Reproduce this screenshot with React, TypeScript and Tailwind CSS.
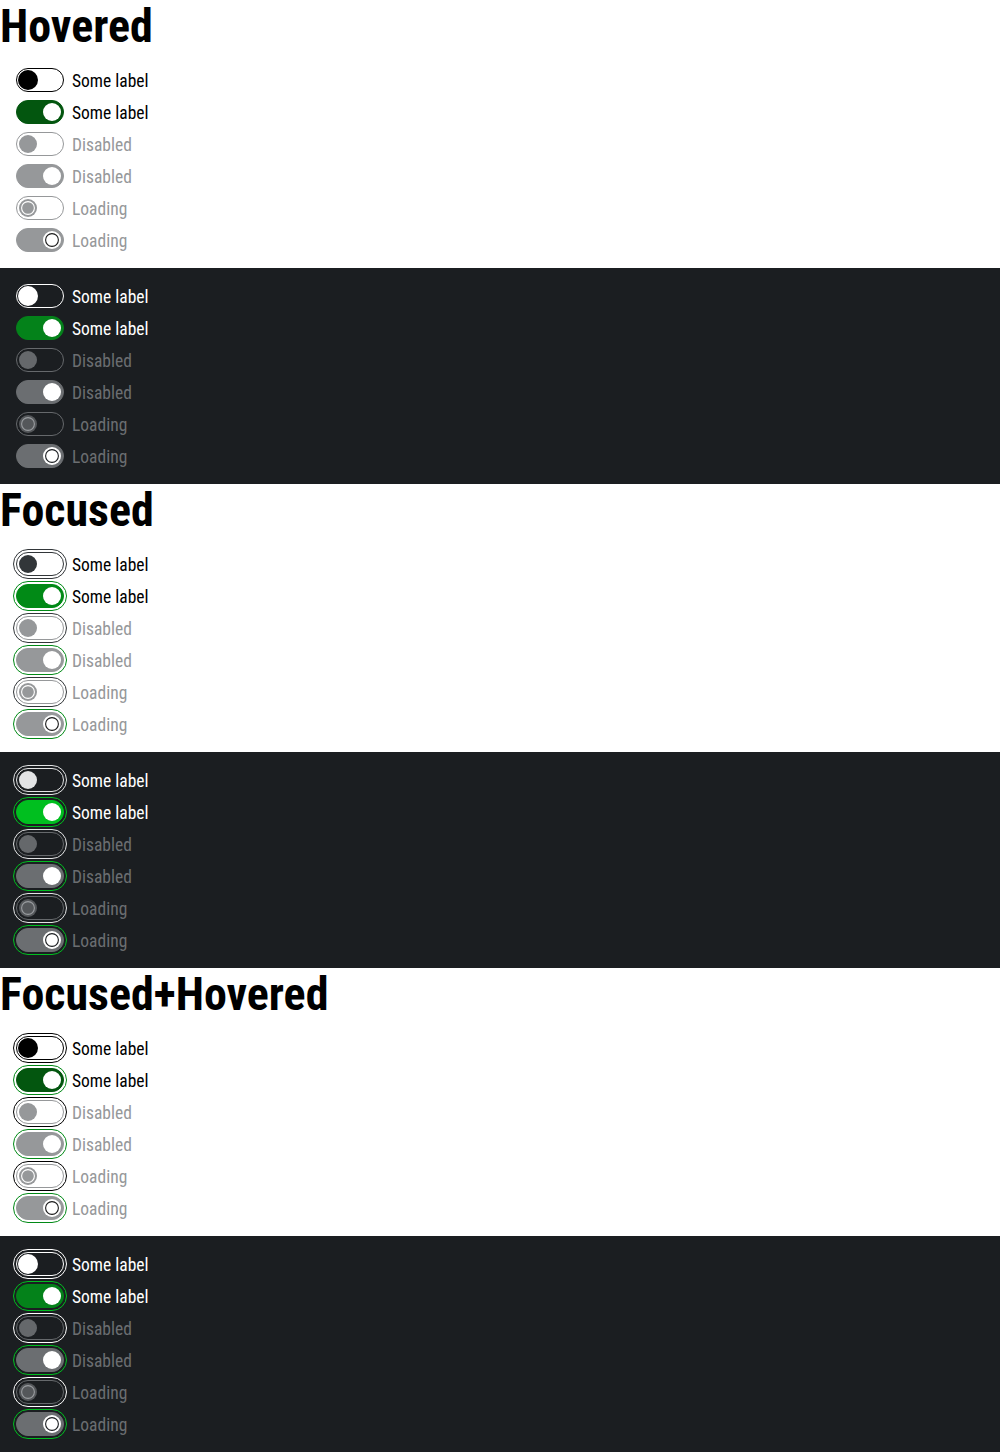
import React from 'react';

type Theme = 'light' | 'dark';
type Mode = 'hover' | 'focus' | 'focushover';
type Kind = 'off' | 'on' | 'disOff' | 'disOn' | 'loadOff' | 'loadOn';

const kinds: Kind[] = ['off', 'on', 'disOff', 'disOn', 'loadOff', 'loadOn'];

const labels: Record<Kind, string> = {
    off: 'Some label',
    on: 'Some label',
    disOff: 'Disabled',
    disOn: 'Disabled',
    loadOff: 'Loading',
    loadOn: 'Loading',
};

// track + knob colours, picked per theme / interaction
const tracks = {
    light: {
        hover: {
            off: 'border-black bg-white',
            on: 'border-[#03560f] bg-[#03560f]',
        },
        focus: {
            off: 'border-[#323639] bg-white',
            on: 'border-[#018a16] bg-[#018a16]',
        },
        disOff: 'border-[#96989a] bg-white',
        disOn: 'border-[#96989a] bg-[#96989a]',
    },
    dark: {
        hover: {
            off: 'border-white bg-transparent',
            on: 'border-[#04821a] bg-[#04821a]',
        },
        focus: {
            off: 'border-[#e3e4e5] bg-transparent',
            on: 'border-[#00bf1f] bg-[#00bf1f]',
        },
        disOff: 'border-[#66696c] bg-transparent',
        disOn: 'border-[#6b6e71] bg-[#6b6e71]',
    },
};

const knobs = {
    light: {
        hover: { off: 'bg-black', on: 'bg-white' },
        focus: { off: 'bg-[#323639]', on: 'bg-white' },
        disOff: 'bg-[#96989a]',
        loadOff: 'bg-[#96989a]',
    },
    dark: {
        hover: { off: 'bg-white', on: 'bg-white' },
        focus: { off: 'bg-[#e3e4e5]', on: 'bg-white' },
        disOff: 'bg-[#65686b]',
        loadOff: 'bg-[#54575a]',
    },
};

const rings = {
    light: { off: 'outline-[#323639]', offHover: 'outline-black', on: 'outline-[#018a16]' },
    dark: { off: 'outline-[#e3e4e5]', offHover: 'outline-white', on: 'outline-[#00bf1f]' },
};

function Switch({ theme, mode, kind }: { theme: Theme; mode: Mode; kind: Kind }) {
    const checked = kind === 'on' || kind === 'disOn' || kind === 'loadOn';
    const disabled = kind !== 'off' && kind !== 'on';
    const loading = kind === 'loadOff' || kind === 'loadOn';
    const t = tracks[theme];
    const k = knobs[theme];
    const m = mode === 'focus' ? 'focus' : 'hover';

    let track = '';
    if (!disabled) track = checked ? t[m].on : t[m].off;
    else track = checked ? t.disOn : t.disOff;

    let knob = 'bg-white';
    if (!checked) {
        if (!disabled) knob = k[m].off;
        else knob = loading ? k.loadOff : k.disOff;
    }

    const big = !checked && !disabled && mode !== 'focus';
    const knobSize = big ? 'w-5 h-5 left-px' : 'w-[18px] h-[18px] left-[2px]';
    const knobPos = checked ? 'translate-x-[24px]' : 'translate-x-0';

    let ring = '';
    if (mode !== 'hover') {
        const r = rings[theme];
        ring = 'outline outline-1 outline-solid outline-offset-2 ' +
            (checked ? r.on : mode === 'focushover' ? r.offHover : r.off);
    }

    const spinner = theme === 'light'
        ? (checked ? '#1a1a1a' : '#ffffff')
        : (checked ? '#1b1e21' : '#9a9da0');

    return (
        <span className={`relative block w-12 h-6 shrink-0 rounded-full border ${track} ${ring}`}>
            <span className={`absolute top-1/2 -translate-y-1/2 ${knobSize} ${knobPos} rounded-full ${knob} flex items-center justify-center`}>
                {loading && (
                    <svg width="16" height="16" viewBox="0 0 16 16" fill="none">
                        <circle cx="8" cy="8" r="6.4" stroke={spinner} strokeWidth="1.1" />
                    </svg>
                )}
            </span>
        </span>
    );
}

function Group({ theme, mode }: { theme: Theme; mode: Mode }) {
    const text = theme === 'light'
        ? { normal: 'text-black', muted: 'text-[#96989a]' }
        : { normal: 'text-white', muted: 'text-[#6b6e71]' };
    return (
        <div className="flex flex-col gap-2">
            {kinds.map((kind) => {
                const disabled = kind !== 'off' && kind !== 'on';
                return (
                    <label key={kind} className="flex items-center gap-2 h-6">
                        <Switch theme={theme} mode={mode} kind={kind} />
                        <span className={`text-[17.5px] leading-6 pt-px ${disabled ? text.muted : text.normal}`}>
                            {labels[kind]}
                        </span>
                    </label>
                );
            })}
        </div>
    );
}

const sections: { title: string; mode: Mode }[] = [
    { title: 'Hovered', mode: 'hover' },
    { title: 'Focused', mode: 'focus' },
    { title: 'Focused+Hovered', mode: 'focushover' },
];

export default function App() {
    return (
        <div className="font-['Liberation_Sans_Narrow','Roboto_Condensed','Liberation_Sans',sans-serif] bg-white">
            {sections.map((s) => (
                <div key={s.title}>
                    {/* light half, with the headline */}
                    <div className="bg-white pb-4">
                        <h2 className="text-[46px] font-bold leading-[52px] text-black">{s.title}</h2>
                        <div className="px-4 pt-4">
                            <Group theme="light" mode={s.mode} />
                        </div>
                    </div>
                    {/* dark half */}
                    <div className="bg-[#1b1e21] px-4 py-4">
                        <Group theme="dark" mode={s.mode} />
                    </div>
                </div>
            ))}
        </div>
    );
}
